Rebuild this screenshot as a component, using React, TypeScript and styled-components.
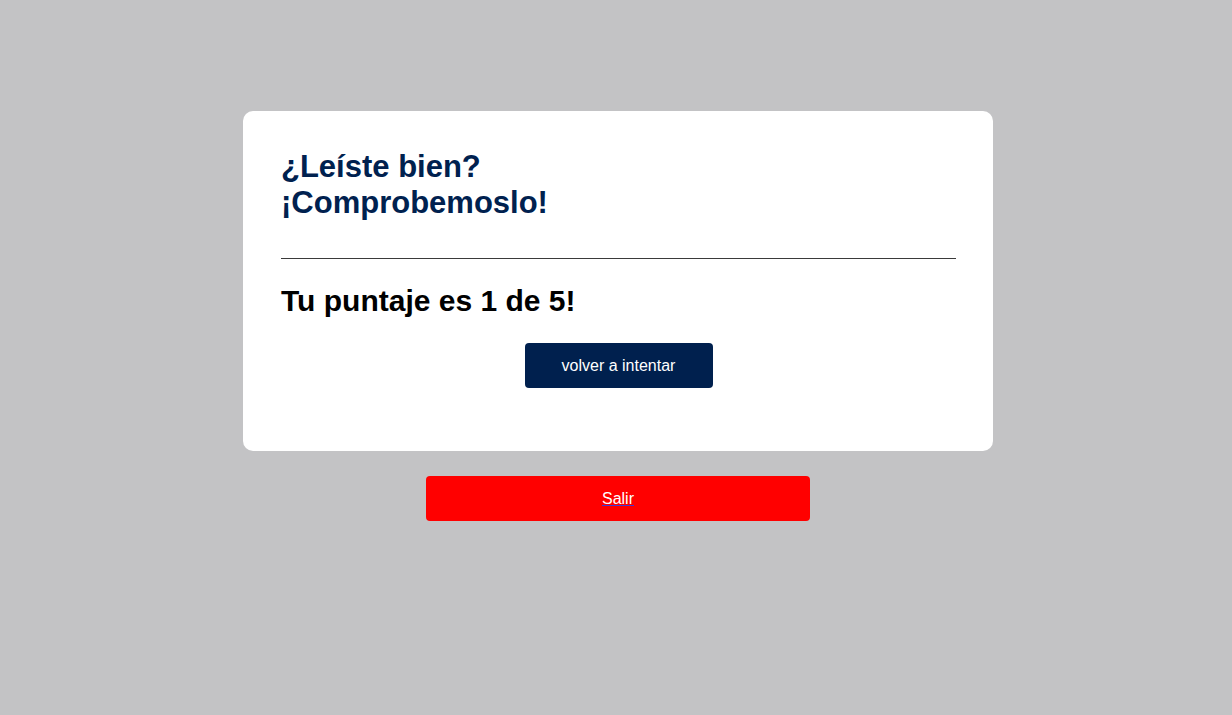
import React from "react";
import styled, { createGlobalStyle } from "styled-components";

const Global = createGlobalStyle`
  html, body {
    margin: 0;
    padding: 0;
    background: #c3c3c5;
    font-family: "Liberation Sans", Arial, sans-serif;
  }
`;

const Page = styled.main`
  display: flex;
  flex-direction: column;
  align-items: center;
  padding: 111px 0 0 4px;
  min-height: 715px;
  box-sizing: border-box;
`;

const Card = styled.section`
  width: 750px;
  box-sizing: border-box;
  background: #ffffff;
  border-radius: 10px;
  padding: 38px 37px 63px 38px;
  display: flex;
  flex-direction: column;
`;

const Title = styled.h1`
  margin: 0;
  font-size: 31px;
  line-height: 36px;
  font-weight: 700;
  color: #00214f;
`;

const Divider = styled.hr`
  margin: 37px 0 0;
  border: none;
  border-top: 1px solid #3a3a3a;
  height: 0;
`;

const Score = styled.h2`
  margin: 24px 0 0;
  font-size: 30px;
  line-height: 35px;
  font-weight: 700;
  color: #000000;
`;

const RetryButton = styled.button`
  align-self: center;
  margin-top: 25px;
  width: 188px;
  height: 45px;
  border: none;
  border-radius: 4px;
  background: #00204e;
  color: #ffffff;
  font-family: "Liberation Sans", Arial, sans-serif;
  font-size: 16px;
  cursor: pointer;
`;

const ExitButton = styled.a`
  margin-top: 25px;
  width: 384px;
  height: 45px;
  display: flex;
  align-items: center;
  justify-content: center;
  border-radius: 4px;
  background: #ff0000;
  color: #3b3bd6;
  text-decoration: underline;
  font-size: 16px;
`;

const ExitLabel = styled.span`
  color: #ffffff;
`;

export default function App() {
  return (
    <>
      <Global />
      <Page>
        <Card>
          <Title>
            ¿Leíste bien?
            <br />
            ¡Comprobemoslo!
          </Title>
          <Divider />
          <Score>Tu puntaje es 1 de 5!</Score>
          <RetryButton>volver a intentar</RetryButton>
        </Card>
        <ExitButton href="#">
          <ExitLabel>Salir</ExitLabel>
        </ExitButton>
      </Page>
    </>
  );
}
